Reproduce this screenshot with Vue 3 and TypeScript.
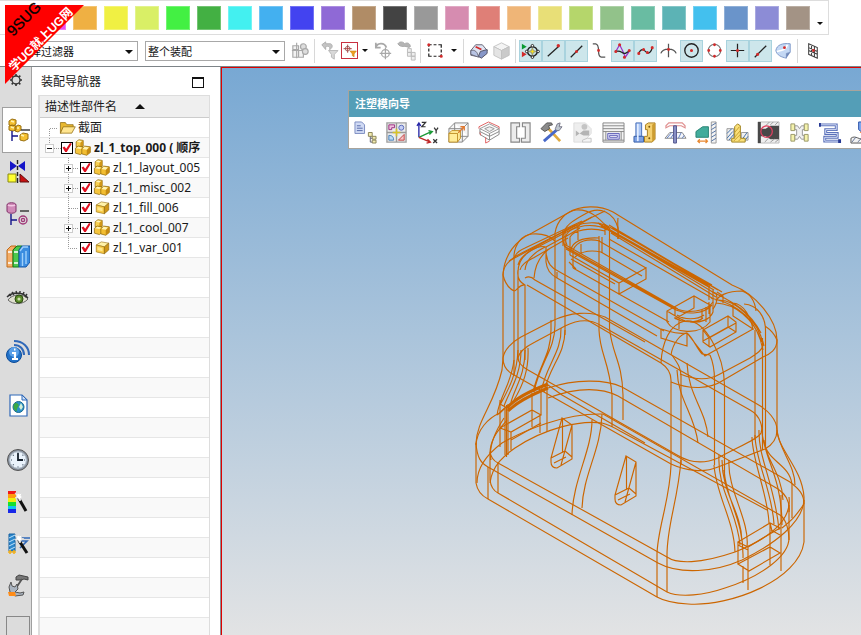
<script setup lang="ts">
import { h, ref } from 'vue'

type Shape = [d: string, fill: string, stroke?: string, width?: number]

interface IconProps { shapes: Shape[]; size?: number }

const Glyph = (props: IconProps) =>
  h(
    'svg',
    { viewBox: '0 0 24 24', width: props.size ?? 24, height: props.size ?? 24, 'aria-hidden': 'true' },
    props.shapes.map(([d, fill, stroke, width]) =>
      h('path', { d, fill, stroke: stroke ?? 'none', 'stroke-width': width ?? 1 })
    )
  )
Glyph.props = ['shapes', 'size']

const dot = (x: number, y: number, r: number) =>
  `M${x - r} ${y}a${r} ${r} 0 1 0 ${2 * r} 0a${r} ${r} 0 1 0 ${-2 * r} 0Z`

const swatches = [
  '#e94bf0', '#efb043', '#f0f043', '#d9ef66', '#43f043', '#43b043', '#43f0f0', '#43b0f0', '#4343f0',
  '#8f69d6', '#b08c66', '#434343', '#999999', '#d68cb0', '#df7f77', '#efb577', '#e8df77', '#b5d66b',
  '#92c28a', '#69bca2', '#5cb3b5', '#43c0ee', '#6a94ca', '#8c8cd6', '#a39385'
]

interface Tool { name: string; on?: boolean; kind?: 'sep' | 'arrow' | 'boxed'; shapes: Shape[] }

const sep: Tool = { name: 'sep', kind: 'sep', shapes: [] }
const arrow: Tool = { name: '更多', kind: 'arrow', shapes: [] }
const G = '#a8a8a8'
const K = '#222'
const R = '#d22b2b'

const tools: Tool[] = [
  { name: '组件', shapes: [['M4 7h6v4h-6zM4 12v7h6v-7M10 12h5v7h-5M8 4v16M3 12h11', '#f2f2f2', G, 1.2], [dot(15, 8, 3), '#ddd', G, 1.2], [dot(17, 13, 3), '#ddd', G, 1.2]] },
  sep,
  { name: '重置过滤器', shapes: [['M4 6l4-3v2h5c3 1 2 5-1 6 1-3-1-4-4-3v3z', '#c4c4c4', '#b0b0b0'], ['M11 12h10l-4 4v5l-3-2v-3z', '#d8d8d8', '#b8b8b8']] },
  { name: '过滤器', kind: 'boxed', shapes: [['M8 1v14M1 8h14', 'none', '#a33', 1.5], [dot(8, 8, 4), 'none', '#844', 1.3], ['M12 12h11l-4 5v5l-3-2v-3z', '#f0a020', '#c88018']] },
  arrow,
  { name: '旋转', shapes: [['M4 9c1-5 9-6 11 0M4 4v5h5', 'none', G, 1.8], ['M14 9v12M8 15h12', 'none', G, 1.3], [dot(14, 15, 4), 'none', G, 1.3]] },
  { name: '列表', shapes: [['M3 5c2-3 6-2 7 0 3-2 6 0 6 3l-2 1c-3-3-8 1-11-4z', '#b4b4b4', G], ['M13 10h4v4h-4zM17 14h4v4h-4zM17 18h4v4h-4zM13 14h4v4h-4z', '#eee', '#bbb']] },
  sep,
  { name: '矩形选择', shapes: [['M5 6h3m2 0h3m2 0h3v3m0 2v3m0 2v2h-3m-2 0h-3m-2 0H5v-3m0-2v-3m0-2V6', 'none', K, 1.3], [dot(5, 6, 1.6) + dot(18, 18, 1.6), R]] },
  arrow,
  sep,
  { name: '着色', shapes: [['M4 12l5-6h7l5 6-6 7-11-2z', '#dfe4f2', '#667'], ['M4 12c4-1 7 1 8 7l-8-3z', '#b8c4e4', '#667'], ['M12 18l2-5 7-2v4l-6 5z', '#8797c8', '#556'], ['M9 8l6 3', 'none', R, 1.8]] },
  { name: '方块', shapes: [['M4 8l8-4 8 4-8 4z', '#f4f4f4', '#c4c4c4'], ['M4 8v9l8 4v-9z', '#e4e4e4', '#c4c4c4'], ['M20 8v9l-8 4v-9z', '#cacaca', '#c0c0c0']] },
  sep,
  { name: '捕捉点', on: true, shapes: [['M3 5l5 3-5 3z', '#0a9a32'], ['M3 13l5 3-5 3z', R], [dot(14, 13, 5), 'none', K, 1.5], ['M14 9l1 3 3 1-3 1-1 3-1-3-3-1 3-1z', '#f5df20', '#997'], [dot(14, 7, 1.3) + dot(14, 19, 1.3) + dot(8, 13, 1.3) + dot(20, 13, 1.3), '#fff', K]] },
  { name: '端点', on: true, shapes: [['M6 18L17 8', 'none', K, 1.3], [dot(17, 7, 1.8), R]] },
  { name: '中点', on: true, shapes: [['M6 19L18 7', 'none', K, 1.3], [dot(12, 13, 1.6), R]] },
  { name: '曲线', shapes: [['M5 5h3c6 1 0 14 6 14h4', 'none', '#555', 1.3], [dot(11, 12, 1.5), R]] },
  { name: '样条极点', on: true, shapes: [['M5 13l4-7 3 6 3 7 4-6', 'none', '#9b30c8', 1.3], ['M5 13c6-2 6 3 10 2l5-3', 'none', K, 1.3], [dot(5, 13, 1.6) + dot(9, 6, 1.6) + dot(14, 19, 1.6) + dot(19, 12, 1.6), R]] },
  { name: '样条', on: true, shapes: [['M5 15c3-7 6-3 8-1s5 0 6-5', 'none', K, 1.3], [dot(5, 15, 1.6) + dot(10, 11, 1.6) + dot(14, 14, 1.6) + dot(19, 9, 1.6), R]] },
  { name: '交点', shapes: [['M4 15c2-6 14-6 16 0M12 5v14', 'none', '#555', 1.3], [dot(12, 11, 1.5), R]] },
  { name: '圆心', on: true, shapes: [[dot(12, 12, 7), 'none', K, 1.4], [dot(12, 12, 1.6), R]] },
  { name: '象限点', shapes: [[dot(12, 12, 6.500), 'none', '#777', 1.2], [dot(12, 6, 1.5) + dot(12, 18, 1.5) + dot(6, 12, 1.5) + dot(18, 12, 1.5), R]] },
  { name: '现有点', on: true, shapes: [['M12 5v14M5 12h14', 'none', K, 1.3], [dot(12, 12, 1.6), R]] },
  { name: '曲线上的点', on: true, shapes: [['M6 19L18 7', 'none', K, 1.3], [dot(9, 16, 1.7), R]] },
  { name: '面上的点', shapes: [['M4 12c1-6 7-8 15-7v9l-4 1v5c-5-1-10-3-11-8z', '#c4d8f4', '#7d98c8'], ['M5 13c6-1 10-2 11-7', 'none', '#fff', 1.6], ['M15 15l4-1-4 6z', '#7088b8'], [dot(13, 9, 1.5), R]] },
  sep,
  { name: '栅格', shapes: [['M8 5l9 4v11l-9-4zM11 6v11M14 8v11M8 9l9 4M8 12l9 4', 'none', '#444', 1.1], [dot(13, 12, 1.5), R]] }
]

const goldCube: Shape[] = [
  ['M2 8l8-5 12 2-7 6z', '#fff2a8', '#9a7210'], ['M2 8l13 3v11L2 19z', '#f9cc48', '#9a7210'], ['M15 11l7-6v11l-7 6z', '#cf9618', '#8a6508'], ['M4 11l8 2v5l-8-2z', '#ffe88c']
]
const goldGroup: Shape[] = [
  ['M3 4l4-3 6 1v8l-4 2-6-1z', '#f8d050', '#8a6508'], ['M9 5l4-3v8l-4 2z', '#cf9618'],
  ['M2 13l4-3 7 1v8l-4 3-7-2z', '#f5c53c', '#8a6508'],
  ['M11 14l4-4 8 1v8l-5 4-7-2z', '#f2bd30', '#8a6508'], ['M18 15l5-4v8l-5 4z', '#c48a12'],
  ['M4 4l3-2 4 1-2 2zM3 13l3-2 5 1-2 2zM12 14l3-3 6 1-3 3z', '#fff4b8']
]
const folder: Shape[] = [
  ['M2 5h7l2 3h9v4H6L3 20H2z', '#e8b830', '#8a6508'], ['M6 11h17l-5 9H2z', '#ffe590', '#8a6508']
]

interface Node { name: string; leaf?: boolean; last?: boolean }
const children: Node[] = [
  { name: 'zl_1_layout_005' },
  { name: 'zl_1_misc_002' },
  { name: 'zl_1_fill_006', leaf: true },
  { name: 'zl_1_cool_007' },
  { name: 'zl_1_var_001', leaf: true, last: true }
]
const checked = ref<boolean[]>([true, true, true, true, true])
const rootChecked = ref(true)
const emptyRows = 19

interface SideItem { name: string; shapes: Shape[] }
const gear: SideItem = { name: '资源条选项', shapes: [[dot(12, 12, 6), 'none', '#333', 2], ['M12 3v3M12 18v3M3 12h3M18 12h3M5.500 5.500l2 2M16.500 16.500l2 2M5.500 18.500l2-2M16.500 7.500l2-2', 'none', '#333', 2.4]] }
const navTab: SideItem = { name: '装配导航器', shapes: [['M2 3l3-2 4 1v4l-3 2-4-1zM2 8l3-1 4 1v4l-3 1-4-1zM8 9l3-2 3 1v4l-3 2-3-1z', '#f5c030', '#9a7010'], ['M4 3l3 1M4 9l3 1M10 10l2 0', 'none', '#fff3b0', 1.5], ['M14 12h9', 'none', '#222', 1.3], ['M5 13v10M5 18h6', 'none', '#13138a', 1.4], ['M13 17l3-2 5 1v5l-4 2-4-1z', '#f5c030', '#9a7010'], ['M14 17l3 1', 'none', '#fff3b0', 1.5]] }
const sideA: SideItem[] = [
  { name: '约束导航器', shapes: [['M4 1l7 5-7 5zM19 1l-7 5 7 5z', '#1515c8'], ['M11.500 0v4m0 2v4m0 2v4m0 2v5', 'none', '#222', 1.4], ['M2 14h8v8H2z', '#ffff30', '#8a8a10'], ['M14 14l9 8h-9z', '#c81010', '#601010']] },
  { name: '部件导航器', shapes: [['M1 3c0-3 9-3 9 0v6c0 3-9 3-9 0z', '#d08ab8', '#803068'], ['M2 3c1 1 6 1 7 0', 'none', '#f3c8e3', 1.6], ['M14 9h9', 'none', '#222', 1.3], ['M5 12v11M5 18h6', 'none', '#13138a', 1.4], [dot(17, 18, 4), 'none', '#a03878', 1.4], [dot(17, 18, 1.6), 'none', '#a03878', 1.4]] },
  { name: '重用库', shapes: [['M1 6l4-4h5l-3 4v17H1z', '#f4ae68', '#c06a18'], ['M7 6l4-4h5l-3 4v17H7z', '#4cc84c', '#0d7a18'], ['M13 6l3-4h8v16l-4 5h-7z', '#3a8ce0', '#1458a8'], ['M2 8h4M2 19h4M8 8h4M8 19h4', 'none', '#fff', 1.4], ['M14 7l3-4h5M16.500 9v13M20 7v13', 'none', '#9fd0fb', 1.4]] },
  { name: '视图', shapes: [['M2 14c4-6 15-7 20-1-5 6-15 6-20 1z', '#e0e0d0', '#666'], [dot(13, 13, 4), '#5a8c28', '#2d4a12'], [dot(13, 13, 1.6), '#cfe0b0'], ['M1 11c5-5 15-6 21 1M3 8l2 2M6 6l2 3M10 5l1 3M14 5v3M18 6l-1 3M21 8l-2 3', 'none', '#333', 1.4]] }
]
const sideB: SideItem[] = [
  { name: 'HD3D 工具', shapes: [[dot(8, 15, 7.5), '#2272c8', '#0b4a98'], [dot(8, 12, 5), '#5aa0e8'], ['M6 13h3v6M6 19h6M8 9.500h1.500', 'none', '#fff', 2.2], ['M8 5c6 0 10 4 10 10M8 1c9 0 15 6 15 14', 'none', '#2f68b8', 2]] },
  { name: 'Web 浏览器', shapes: [['M4 1h12l5 5v16H4z', '#fff', '#2f68b8', 1.2], ['M16 1v5h5z', '#cfe0f5', '#2f68b8'], [dot(12.5, 13, 5.5), '#2b90c8', '#1b6a90'], ['M9 9c3 0 5 2 3 4s0 5-2 4-4-5-1-8z', '#3aa845'], ['M15 9l2 4-2 3-2-3z', '#d5f0d8']] },
  { name: '历史记录', shapes: [[dot(12, 12, 10.5), '#8a93a0', '#555'], [dot(12, 12, 8.300), '#eaf3fc', '#b8c4d0'], ['M12 5v7h5', 'none', '#15202c', 1.8], ['M12 4.500v1M12 18.500v1M5 12h1M18 12h1M7 7l.7.7M16.500 16.500l.7.7M7 17l.7-.7M16.500 7.500l.7-.7', 'none', '#456', 1.2]] }
]
const sideC: SideItem[] = [
  { name: '系统材料', shapes: [['M2 1h8v4H2z', '#f01818'], ['M2 4h8v4H2z', '#ff9c10'], ['M2 8h8v4H2z', '#f0f010'], ['M2 12h8v4H2z', '#18e030'], ['M2 16h8v3H2z', '#10c8f0'], ['M2 19h8v4H2z', '#1828e8'], ['M12 7l8 14', 'none', '#111', 3], ['M12 1l1 3 3-1-1 3 3 1-3 1-1 3-2-3-3 0 2-2-2-3 3 1z', '#fff', '#ddd']] },
  { name: '加工向导', shapes: [['M3 2h6v17H3z', '#2c88cc', '#1760a0'], ['M3 6l6-3M3 10l6-3M3 14l6-3M3 18l6-3', 'none', '#bfe2fa'], ['M11 6h13M13 9h8l-7 7', 'none', '#2f68b8', 1.6], ['M2 20h8M4 18v4M8 18v4', 'none', '#f0b020', 1.6], ['M12 7l9 14', 'none', '#111', 3], ['M12 1l1 3 3-1-1 3 3 1-3 1-1 3-2-3-3 0 2-2-2-3 3 1z', '#fff', '#ddd']] },
  { name: '角色', shapes: [['M10 3l3-2 9 2v3l-4-1-3 1-5 0z', '#777', '#444'], ['M16 5l-6 9', 'none', '#555', 1.8], ['M5 8l1 4 3 1 2-3 1 5-3 3 5 1 4-1-1 3-8 1-5-4-1-5z', '#aab4c0', '#555'], ['M2 18h7l1 4H3z', '#ff8c18']] }
]

const wizard: Tool[] = [
  { name: '初始化项目', shapes: [['M1 1h7l3 3v9H1z', '#d0daf4', '#7c8cc0'], ['M3 5h4M3 7.500h6M3 10h6', 'none', '#5568a8'], ['M15 12h4v4h-4zM19 16h4v3h-4zM19 20h4v3h-4z', '#f3ecb0', '#8a8458'], ['M17 16v6h2M17 18h2', 'none', '#667']] },
  { name: '模具设计验证', shapes: [['M2 2h20v20H2z', '#ececec', '#a0a0a0', 1.4], ['M12 2v20M2 12h20', 'none', '#999', 1.4], ['M4 4h6v3H7v2H4z', '#f0c0de', '#9a3080'], [dot(17, 7, 2.6), '#c4cef4', '#5868b8'], ['M4 20v-5c4 0 5 2 5 5z', '#bcdcf5', '#4880b8'], ['M20 14v6h-6z', '#f8c4c4', '#c04040'], ['M12 8v8M8 12h8', 'none', '#d8c428', 1.6]] },
  { name: '模具坐标系', shapes: [['M3 17V3M1 5l2-3 2 3', 'none', '#2828a8', 1.4], ['M3 17l13-6M13 10l4 1-3 3', 'none', '#1c9a38', 1.4], ['M3 17l12 5M12 19l3 3-4 1', 'none', '#c02828', 1.4], ['M6 1.500h4l-4 4.500h4M19 7l2 3 2-3M21 10v3M18 19l4 4M22 19l-4 4', 'none', '#333', 1.3]] },
  { name: '工件', shapes: [['M2 8l6-6h14v14l-6 6H2zM2 8h14v14M16 8l6-6M8 2v14h14M8 16l-6 6', '#f4f4f4', '#888'], ['M2 13l3-3h9v8l-3 4H2z', '#ffec98', '#c09028'], ['M2 13h9v9M11 13l3-3', 'none', '#c09028'], ['M12 12l6-6M14 6h4v4', 'none', '#e07830', 1.4]] },
  { name: '型腔布局', shapes: [['M2 8l10-5 10 5-10 5z', '#fafafa', '#999'], ['M2 8v6l10 6 10-6V8M2 11l10 5 10-5M12 13v7', 'none', '#888'], ['M7 8l5-2 5 2-5 3z', '#eee', '#999'], ['M1 8V6l10-5 11 5v2M2 12l1 3M8 17v6l4-2', 'none', '#e06060']] },
  { name: '分型', shapes: [['M2 2h9v4H8v12h3v4H2z', '#ececec', '#888', 1.2], ['M13 22h9V2h-8v4h3v12h-4z', '#ececec', '#888', 1.2]] },
  { name: '注塑模工具', shapes: [['M7 6l14 15', 'none', '#e0aa40', 2.8], ['M19 8L4 21', 'none', '#4868c8', 3], ['M1 8l6-6 5 0 1 2-4 1 1 3-5 3z', '#8a8a8a', '#555'], ['M16 8l2-5 3-1-1 4 3 0-3 4-3 0z', '#c0c8d0', '#778']] },
  { name: '模具分型', shapes: [['M3 2h12l6 6v5l-8 9H3z', '#eee', '#ddd'], [dot(14, 6, 3), '#c4c4c4'], ['M5 10l4 3 4-3h6v5h-6l-4-2-4 3z', '#b4b4b4'], ['M12 20l5-2h4v4h-9z', '#f4f4f4', '#c4c4c4']] },
  { name: '模架库', shapes: [['M1 2h22v20H1z', '#f4f4f4', '#888'], ['M1 5h22M1 8h22M1 11h22M1 20h22M4 11v9M20 11v9', 'none', '#888'], ['M6 13h12v6H6z', '#dcdcf8', '#6060b8'], ['M8 15h8v2H8z', '#fff', '#6060b8']] },
  { name: '标准部件库', shapes: [['M3 2h6v14H3z', '#a8c4f4', '#4870b8'], ['M1 16h10v6H1z', '#7ca0e4', '#3860a8'], ['M5 3v18', 'none', '#e4eeff', 1.8], ['M13 4l3-2h7v17l-3 3h-8v-6h3V9h-2z', '#f4d070', '#a87c1c'], ['M20 4l3-2v17l-3 3z', '#cc9c30'], [dot(17, 6, 1) + dot(17, 18, 1), '#7a5508']] },
  { name: '顶杆后处理', shapes: [['M2 7V5l3-3h14l3 3v2l-4-2H6z', '#fff', '#e09090', 1.2], ['M1 18l5-6h13l4 6z', '#f4f6fc', '#888'], ['M3 18l5-6M7 18l4-6M15 18l3-6M19 18l2-3', 'none', '#6080c0'], ['M10 5h3v18h-3z', '#8c94c8', '#50548c']] },
  { name: '滑块和浮升销库', shapes: [['M1 11l7-5h6v11H1z', '#42ac9c', '#2a8474'], ['M17 1h5v22h-5z', '#f4f4f4', '#999'], ['M17 5l5-3M17 9l5-3M17 13l5-3M17 17l5-3M17 21l5-3', 'none', '#5070a0'], ['M3 21h9M5 19l-2 2 2 2M11 19l2 2-2 2', 'none', '#e88830', 1.3]] },
  { name: '子镶块库', shapes: [['M1 8h7v12H1zM16 12h7v8h-7z', '#f0f0f0', '#999'], ['M1 13l5-5M1 18l6-7M3 20l5-6M17 19l5-7M20 20l3-4', 'none', '#4070a8'], ['M9 6l3-3 3 2v13h5v4H6v-4h3z', '#fae078', '#a08420'], ['M9 12l5-6M9 17l6-7M8 21l7-7M13 21l3-3', 'none', '#c8a030']] },
  { name: '浇口库', shapes: [['M1 1h22v22H1z', '#efefef', '#bbb'], ['M1 1h3v22H1zM4 8h5l5-3h9v14h-9l-5-3H4z', '#484848'], ['M9 5l4-4M14 4l3-3M19 4l3-3M8 22l4-4M14 22l4-3M19 22l4-3', 'none', '#999'], [dot(10, 11, 6), 'none', '#e04060', 1.3]] },
  { name: '流道', shapes: [['M7 5h3l2 3 2-3h3v4h-2v6h2v4h-3l-2-3-2 3H7v-4h2V9H7z', '#f0f0f0', '#999'], ['M3 3h4v7H3zM17 3h4v7h-4zM3 14h4v7H3zM17 14h4v7h-4z', '#f4f2ac', '#9a9868']] },
  { name: '模具冷却工具', shapes: [['M1 4h17v5H7v4h12v4H6v4h16', 'none', '#5a70b8', 3], ['M1 4h17v5H7v4h12v4H6v4h16', 'none', '#dce4fa'], ['M0 2h2v4H0zM20 19h3v4h-3z', '#263994']] },
  { name: '电极', shapes: [['M9 1h9v8l-4 4-5-4z', '#80a8ef', '#2850a8'], ['M10 12l4-3 4 3-2 2z', '#f08028'], ['M1 18c5-4 9 3 14 0l8-1v6H1z', '#f2f2f2', '#555'], ['M2 22l4-5M8 22l4-4M14 22l4-4', 'none', '#607090']] }
]

/* Projected edges of the part, in viewport coordinates. */
const silhouette = [
  'M503 358V275C504 255 516 240 532 233L568 213C580 205 600 205 613 212L732 285C756 294 777 320 777 340V430C778 450 802 468 804 497V542C799 580 730 607 688 604C672 603 664 601 657 597L488 499C480 495 477 489 476 483V443C477 420 494 405 502 370L503 358'
]
const edges = [
  // upper left corner
  'M503 275C505 283 508 288 514 291M514 375V255C515 245 521 235 532 234C543 233 551 237 555 241',
  'M518 360V272C518 262 524 255 530 251C537 247 543 246 546 247M525 360V285C519 282 517 277 518 270M525 285C519 284 517 291 514 291',
  'M534 278C535 265 541 252 556 245M525 278C530 275 533 278 535 280L645 342M527 285L661 363M503 275C503 266 509 261 516 256L580 223L605 211M520 270C521 264 528 261 535 257L568 238',
  'M518 265C520 257 527 253 532 250L580 225M514 258C516 253 520 250 525 248L582 221M525 270C526 260 533 253 545 247M509 261L576 225M546 247L566 236',
  'M555 325V233C557 220 567 211 576 210C590 209 599 218 608 228M565 335V230C567 224 576 219 585 214C600 205 614 213 618 228V239M580 224L592 217',
  'M599 330V236M609.500 328V228M618 218C617 226 619 231 618 239',
  'M546 247V262C547 270 550 274 557 278L657 336M546 252C547 264 552 268 558 271L664 331M557 272V278',
  // slot rim
  'M565 247C560 236 563 229 575 226C588 221 603 222 609 228M567 245C563 236 567 230 579 227C590 224 602 226 607 230M570 255V237C574 230 590 227 605 231M578 226V240M571 250C572 242 582 237 599 238M573 268V250C577 241 588 238 600 241M575 257C582 251 592 250 601 252M581 244V254M605 225V235M602 237V253M565 237L580 228',
  'M562 233L575 226M563 246V230M599 224L710 287M601 226L714 290M604 224L712 285M608 229L716 294M611 233L716 297M609 225L722 292M609 239L712 298M599 241L646 268M598 223L708 285M612 228L718 290',
  'M565 247L675 308C687 314 706 312 713 302M566 249L676 310C688 315 704 314 712 305M564 244L678 309M564 246L676 309',
  'M570 255L619 283L646 268V279L619 294V283M573 268L619 294M571 259L615 284M619 294L669 322M601 252L642 276M576 269L569 262',
  // boss
  'M667 322V311L694 296L710 305V322C699 336 674 333 667 322M694 296V308L675 319M675 308V319M679 318V329M702 310V319M706 307V322M667 311C674 315 678 318 685 321M675 318C682 323 697 323 703 318M677 315C684 320 697 320 704 315M709 302V314M713 290V312C710 320 700 323 690 322',
  // key slot
  'M703 330L728 316L736 322V332L710 347L703 342ZM709 338L736 323M728 316V327L703 341M728 327L736 332M703 330L709 338V347',
  'M661 329V338L687 346V333M661 329C670 331 675 335 687 333L705 356L753 329L733 316V303M687 333C693 338 696 347 702 354L710 355',
  // upper right corner
  'M717 300C735 299 758 320 764 346M716 303C735 304 753 318 762 342M711 298C740 305 757 320 763 350M713 292C728 300 748 308 761 333M742 291C727 291 718 296 716 301M742 291C751 294 755 302 756 311M733 303C744 304 751 317 753 330M717 292L723 296V303M709 284V300M716 293C718 299 716 305 713 309',
  'M744 304C757 305 766 316 765.500 332V450M755 330V440M762.500 338V450M765 326C771 330 775 335 777 340C777 350 770 354 763 357L722 381C710 389 690 390 671 382M763 345C762 350 758 353 750 358L720 374C708 381 695 380 680 374',
  // front column
  'M661 363C662 342 670 324 685 321C705 318 724 356 724.500 385V478M671 355C673 342 681 334 687 333M710 355C713 362 714.500 370 714.500 380V465M661 363C667 367 671 372 671 380V465M672 355C678 364 681 368 681 376V465',
  'M677 370C678 400 695 415 698 443M687 363C688 395 706 410 708 437',
  // belt ring
  'M503 358C504 350 512 342 521 337L552 321C570 312 590 311 605 317L757 404C768 410 777 420 777 430C777 440 772 445 765 449L718 467C704 473 686 471 671 464L514 375C506 371 503 365 503 358Z',
  'M518 358C519 352 525 347 535 342L565 326C577 320 590 319 600 325L750 410C761 416 763 428 761 433C758 439 740 446 718 458C704 464 690 463 677 455L528 370C521 366 518 362 518 358Z',
  // flares on the left
  'M514 360C511 385 500 395 497 415M518 350C517 375 508 390 500 405M521 350C521 375 510 390 504 406M525 350C525 375 516 385 511 402M528 348C529 370 523 385 514 400',
  'M555 325C555 350 540 362 534 392M551 320V330C551 355 539 365 533 392M565 330C565 355 550 365 544 392M561 328C562 352 546 365 541 392',
  'M599 330C600 355 609 360 612 395V427M609.500 328C612 355 622 360 623 395V420',
  // latch window on the left
  'M500 400V447M505 407V455M506.500 405V457M508 404V455M511 432V450M547 385V432M541 390V415M532 393V427M540 415V433M500 428L532 410L541 415L511 432L500 428M511 440L541 423M532 410L541 415M507 408L500 404M497 415L506 407',
  // base, upper faces
  'M548 388C575 379 605 379 622 387L790 482C799 489 804 494 804 504M548 398C575 388 600 387 618 396L778 489C787 495 790 503 789 512M548 385L562 395L645 443',
  'M477 483C477 466 490 452 502 443C525 430 565 413 603 414L780 515C787 520 789 532 789 540M490 483C492 465 505 455 515 448C545 428 580 420 602 423C610 425 615 428 620 431L767 510',
  'M476 445C477 430 488 418 500 413L505 408M490 452C491 437 499 430 507 420',
  'M476 443C477 458 481 463 488 467L658 563C680 575 715 572 742 560C775 544 803 522 804 500M490 452C491 458 494 461 498 463L667 557C677 564 700 564 735 552C770 538 792 520 789 497',
  'M490 452V480C491 488 494 491 498 493L667 592C680 598 705 595 725 588C760 577 790 556 789 537V505M488 467V499M498 463V493M504 418C493 435 489 450 491 460',
  // lower wall blends
  'M592 420C592 450 573 480 572 515M602 414C601 450 583 475 582 508',
  'M671 465C670 500 657 530 657 555V597M681 460C678 500 667 525 667 555V592',
  'M714 465C716 495 734 520 735 552M719 455C717 490 737 510 740 545M724 470C726 500 744 520 743 558M729 460C727 490 750 520 747 547M722 460C722 494 741 510 742 541',
  'M752 437C752 460 768 495 769 523M755 435C755 460 772 490 774 524M762 430C762 455 782 475 782 525M765 445C767 460 782 475 783 500M759 430C758 458 775 485 779 530M777 430C779 450 795 465 795 485M764 440C766 462 789 463 792 484V518',
  // latch window on the right
  'M738 542L770 523L780 528L748 547ZM738 564L770 547L780 553L749 571ZM738 542V564M743 566V583M748 547V590M770 523V565M781 495V571M738 545L748 550M771 530L780 535M770 523L772 531M782 528C792 520 795 517 804 504',
  // ribs
  'M562 418L572 425V459L557 468C553 468 551 466 551 462V458ZM562.500 418V452M572 425L561 465M551 458L565 451L572 457M554 463L566 457',
  'M626 456L636 462V496L621 505C617 505 615 503 615 499V495ZM626.500 456V489M636 462L625 502M615 495L629 488L636 494M618 500L630 494'
]
const latchBand = 'M507 408C515 398 530 391 548 384M508 411C518 401 533 394 548 388'
</script>

<template>
  <div class="app">
    <header class="bars">
      <div class="palette" role="toolbar" aria-label="颜色">
        <button v-for="c in swatches" :key="c" class="swatch" type="button" :aria-label="c" :style="{ background: c }"></button>
        <button class="tiny more" type="button" aria-label="更多颜色"><i class="caret"></i></button>
      </div>
      <div class="filters" role="toolbar" aria-label="选择条">
        <label class="combo type">
          <select aria-label="类型过滤器"><option>选择过滤器</option></select>
          <i class="caret big"></i>
        </label>
        <label class="combo scope">
          <select aria-label="选择范围"><option>整个装配</option></select>
          <i class="caret big"></i>
        </label>
        <template v-for="(t, i) in tools" :key="i">
          <span v-if="t.kind === 'sep'" class="sep"></span>
          <button v-else-if="t.kind === 'arrow'" class="tiny" type="button" :aria-label="t.name"><i class="caret"></i></button>
          <button v-else class="tool" :class="{ on: t.on, boxed: t.kind === 'boxed' }" type="button" :aria-label="t.name">
            <Glyph :shapes="t.shapes" :size="t.kind === 'boxed' ? 14 : 23" />
          </button>
        </template>
      </div>
    </header>

    <div class="work">
      <nav class="side" aria-label="资源条">
        <button class="side-btn gear" type="button" :aria-label="gear.name"><Glyph :shapes="gear.shapes" :size="16" /></button>
        <button class="side-btn tab" type="button" :aria-label="navTab.name"><Glyph :shapes="navTab.shapes" /></button>
        <div class="side-group">
          <button v-for="s in sideA" :key="s.name" class="side-btn" type="button" :aria-label="s.name"><Glyph :shapes="s.shapes" /></button>
        </div>
        <div class="side-group airy">
          <button v-for="s in sideB" :key="s.name" class="side-btn" type="button" :aria-label="s.name"><Glyph :shapes="s.shapes" /></button>
        </div>
        <div class="side-group">
          <button v-for="s in sideC" :key="s.name" class="side-btn" type="button" :aria-label="s.name"><Glyph :shapes="s.shapes" /></button>
          <button class="side-btn" type="button" aria-label="空白"><span class="blank"></span></button>
        </div>
      </nav>

      <section class="panel">
        <div class="panel-head">
          <h1>装配导航器</h1>
          <button class="dock" type="button" aria-label="最大化"></button>
        </div>
        <div class="tree">
          <div class="col-head">描述性部件名<i class="sort"></i></div>
          <ul>
            <li class="row">
              <svg class="guide folder-lead" viewBox="0 0 19 20"><path d="M9.500 20V10.500H18" /></svg>
              <Glyph :shapes="folder" :size="17" />
              <span>截面</span>
            </li>
            <li class="row root">
              <span class="lead">
                <svg class="guide" viewBox="0 0 21 20"><path d="M9.500 0V10M10 10.500H21" /></svg>
                <button class="expander" type="button" aria-label="折叠"></button>
              </span>
              <label><input v-model="rootChecked" type="checkbox" /><Glyph :shapes="goldGroup" :size="17" /><b>zl_1_top_000 ( 顺序</b></label>
            </li>
            <li v-for="(n, i) in children" :key="n.name" class="row child">
              <span class="lead">
                <svg class="guide" viewBox="0 0 40 20"><path :d="n.last ? 'M28.500 0V10.500H38' : 'M28.500 0V20M29 10.500H38'" /></svg>
                <button v-if="!n.leaf" class="expander plus" type="button" aria-label="展开"></button>
              </span>
              <label><input v-model="checked[i]" type="checkbox" /><Glyph :shapes="n.leaf ? goldCube : goldGroup" :size="n.leaf ? 15 : 17" /><span>{{ n.name }}</span></label>
            </li>
            <li v-for="k in emptyRows" :key="k" class="row"></li>
          </ul>
        </div>
      </section>

      <main class="canvas">
        <svg class="model" viewBox="222 68 639 567" preserveAspectRatio="xMinYMin slice" role="img" aria-label="线框模型">
          <path v-for="d in silhouette" :key="d" :d="d" />
          <path v-for="d in edges" :key="d" :d="d" />
          <path :d="latchBand" class="band" />
        </svg>
        <section class="wizard">
          <h2>注塑模向导</h2>
          <div class="wizard-tools">
            <button v-for="t in wizard" :key="t.name" type="button" :aria-label="t.name"><Glyph :shapes="t.shapes" :size="23" /></button>
          </div>
        </section>
      </main>
    </div>

    <svg class="ribbon" viewBox="0 0 84 84" aria-label="9SUG">
      <path d="M0 0H79L0 79Z" fill="#f00" />
      <text transform="translate(8 32) rotate(-45)" class="brand">9SUG</text>
      <text transform="translate(9 67) rotate(-45)" class="slogan">学UG就上UG网</text>
    </svg>
  </div>
</template>

<style>
html, body, #app { height: 100%; }
body { overflow: hidden; }
</style>

<style scoped>
.app {
  position: relative;
  display: flex;
  flex-direction: column;
  height: 100%;
  overflow: hidden;
  background: #fff;
  color: #1a1a1a;
  font: 12px/20px "Noto Sans", "Noto Sans CJK SC", sans-serif;
}
button { padding: 0; border: 0; background: none; font: inherit; color: inherit; }
svg { display: block; flex: none; }
h1, h2, ul { margin: 0; padding: 0; font: inherit; list-style: none; }

.bars { flex: none; border-bottom: 1px solid #7d8488; }
.palette {
  display: flex;
  align-items: center;
  gap: 7px;
  box-sizing: border-box;
  width: fit-content;
  height: 35px;
  padding: 0 6px 0 42px;
  border: solid #ddd;
  border-width: 1px 1px 1px 0;
}
.swatch { width: 24px; height: 24px; flex: none; border: 1px solid rgba(255, 255, 255, 0.25); }
.tiny { display: flex; align-items: center; justify-content: center; flex: none; width: 14px; height: 23px; }
.more { width: 5px; padding-top: 12px; }
.caret { width: 0; height: 0; flex: none; border: solid transparent; border-width: 3px 3px 0; border-top-color: #111; }
.caret.big { border-width: 4px 4px 0; border-top-color: #111; }

.filters { display: flex; align-items: center; height: 31px; padding-left: 16px; }
.combo { position: relative; flex: none; height: 20px; }
.combo.type { width: 122px; margin-right: 7px; }
.combo.scope { width: 140px; margin-right: 4px; }
.combo select {
  appearance: none;
  box-sizing: border-box;
  width: 100%;
  height: 20px;
  padding: 0 16px 0 2px;
  border: 1px solid #a8a8a8;
  border-radius: 0;
  background: #fff;
  color: #111;
  font: 11px/18px "Noto Sans CJK SC", sans-serif;
}
.combo .caret { position: absolute; right: 5px; top: 9px; pointer-events: none; }
.tool { display: flex; align-items: center; justify-content: center; flex: none; box-sizing: border-box; width: 23px; height: 22px; }
.tool.on { border: 1px solid #a9d3de; background: #cde6eb; }
.tool.boxed { width: 17px; height: 17px; border: 1px solid #c83040; }
.sep { flex: none; width: 1px; height: 24px; margin: 0 3px 0 2px; background: #d8d8d8; }

.work { display: flex; flex: 1; min-height: 0; }
.side {
  flex: none;
  box-sizing: border-box;
  width: 32px;
  overflow: hidden;
  border-right: 1px solid #a0a0a0;
  background: #dcdcdc;
}
.side-btn { display: flex; align-items: center; justify-content: center; width: 100%; height: 42px; padding-left: 4px; }
.side-btn.gear { height: 40px; padding: 0 0 14px; }
.side-btn.tab {
  box-sizing: border-box;
  width: 30px;
  height: 46px;
  margin: 0 0 -2px 2px;
  padding-left: 3px;
  border: solid #a0a0a0;
  border-width: 1px 0 1px 1px;
  background: #fff;
}
.side-group.airy { display: grid; gap: 12px; margin-top: 12px; }
.blank { box-sizing: border-box; width: 24px; height: 24px; border: 1px solid #888; }

.panel { display: flex; flex-direction: column; flex: none; box-sizing: border-box; width: 189px; padding: 0 10px 0 6px; border-right: 1px solid #8a8f94; }
.panel-head { display: flex; align-items: center; justify-content: space-between; height: 28px; padding: 2px 6px 0 3px; box-sizing: border-box; }
.dock { box-sizing: border-box; width: 12px; height: 11px; border: solid #111; border-width: 2px 1px 1px; }
.tree { flex: 1; min-height: 0; overflow: hidden; border: solid #ddd; border-width: 1px 1px 0 2px; }
.col-head { display: flex; align-items: center; gap: 18px; height: 21px; padding-left: 5px; border-bottom: 1px solid #ccc; background: #efefef; }
.sort { width: 0; height: 0; border: solid transparent; border-width: 0 5px 5px; border-bottom-color: #111; }
.row { display: flex; align-items: center; box-sizing: border-box; height: 20px; overflow: hidden; border-bottom: 1px solid #e6e6e6; white-space: nowrap; }
.row:nth-child(even) { background: #f9f9f9; }
.row > span:last-child { padding-left: 2px; }
.row label { display: flex; align-items: center; }
.row label svg { margin-left: 1px; }
.row label > :last-child { padding-left: 3px; }
.row.child label > svg[width="15"] { margin: 0 0 0 3px; }
.lead { position: relative; flex: none; width: 21px; height: 20px; }
.child .lead { width: 40px; }
.guide { width: 100%; height: 20px; fill: none; stroke: #999; stroke-dasharray: 1 1; }
.folder-lead { width: 19px; }
.expander {
  position: absolute;
  left: 5px;
  top: 6px;
  width: 9px;
  height: 9px;
  border: 1px solid #ccc;
  box-sizing: border-box;
  background: linear-gradient(#111, #111) center / 5px 1px no-repeat #fff;
}
.child .expander { left: 24px; }
.expander.plus { background: linear-gradient(#111, #111) center / 5px 1px no-repeat, linear-gradient(#111, #111) center / 1px 5px no-repeat #fff; }
input[type="checkbox"] { appearance: none; display: block; flex: none; box-sizing: border-box; width: 12px; height: 12px; margin: 0; border: 1px solid #000; background: #fff; }
input[type="checkbox"]:checked::before {
  content: "";
  display: block;
  width: 10px;
  height: 10px;
  background: #e01020;
  clip-path: polygon(5% 50%, 25% 40%, 42% 62%, 80% 5%, 98% 12%, 48% 95%, 32% 95%);
}

.canvas {
  position: relative;
  flex: 1;
  min-width: 0;
  overflow: hidden;
  border: solid #e00000;
  border-width: 1px 0 0 1px;
  background: linear-gradient(#78a8d3, #e2e3e4);
}
.model { width: 100%; height: 100%; fill: none; stroke: #cc6600; stroke-width: 1.15; }
.band { stroke-width: 3; }
.wizard { position: absolute; left: 126px; right: 0; top: 22px; border: 1px solid #a8a49c; border-right: 0; background: #fff; }
.wizard h2 { height: 26px; padding-left: 6px; background: #549eb7; color: #fff; font: bold 11px/25px "Noto Sans CJK SC", sans-serif; }
.wizard-tools { display: flex; align-items: center; gap: 7px; height: 31px; padding-left: 5px; overflow: hidden; }
.wizard-tools button { flex: none; width: 24px; height: 23px; }

.ribbon { position: absolute; left: 5px; top: 5px; width: 84px; height: 84px; overflow: visible; pointer-events: none; }
.brand { font: 15px "Liberation Sans", sans-serif; fill: #000; stroke: #000; stroke-width: 0.3; }
.slogan { font: bold 12px "Liberation Sans", "Noto Sans CJK SC", sans-serif; fill: #fff; }
</style>
